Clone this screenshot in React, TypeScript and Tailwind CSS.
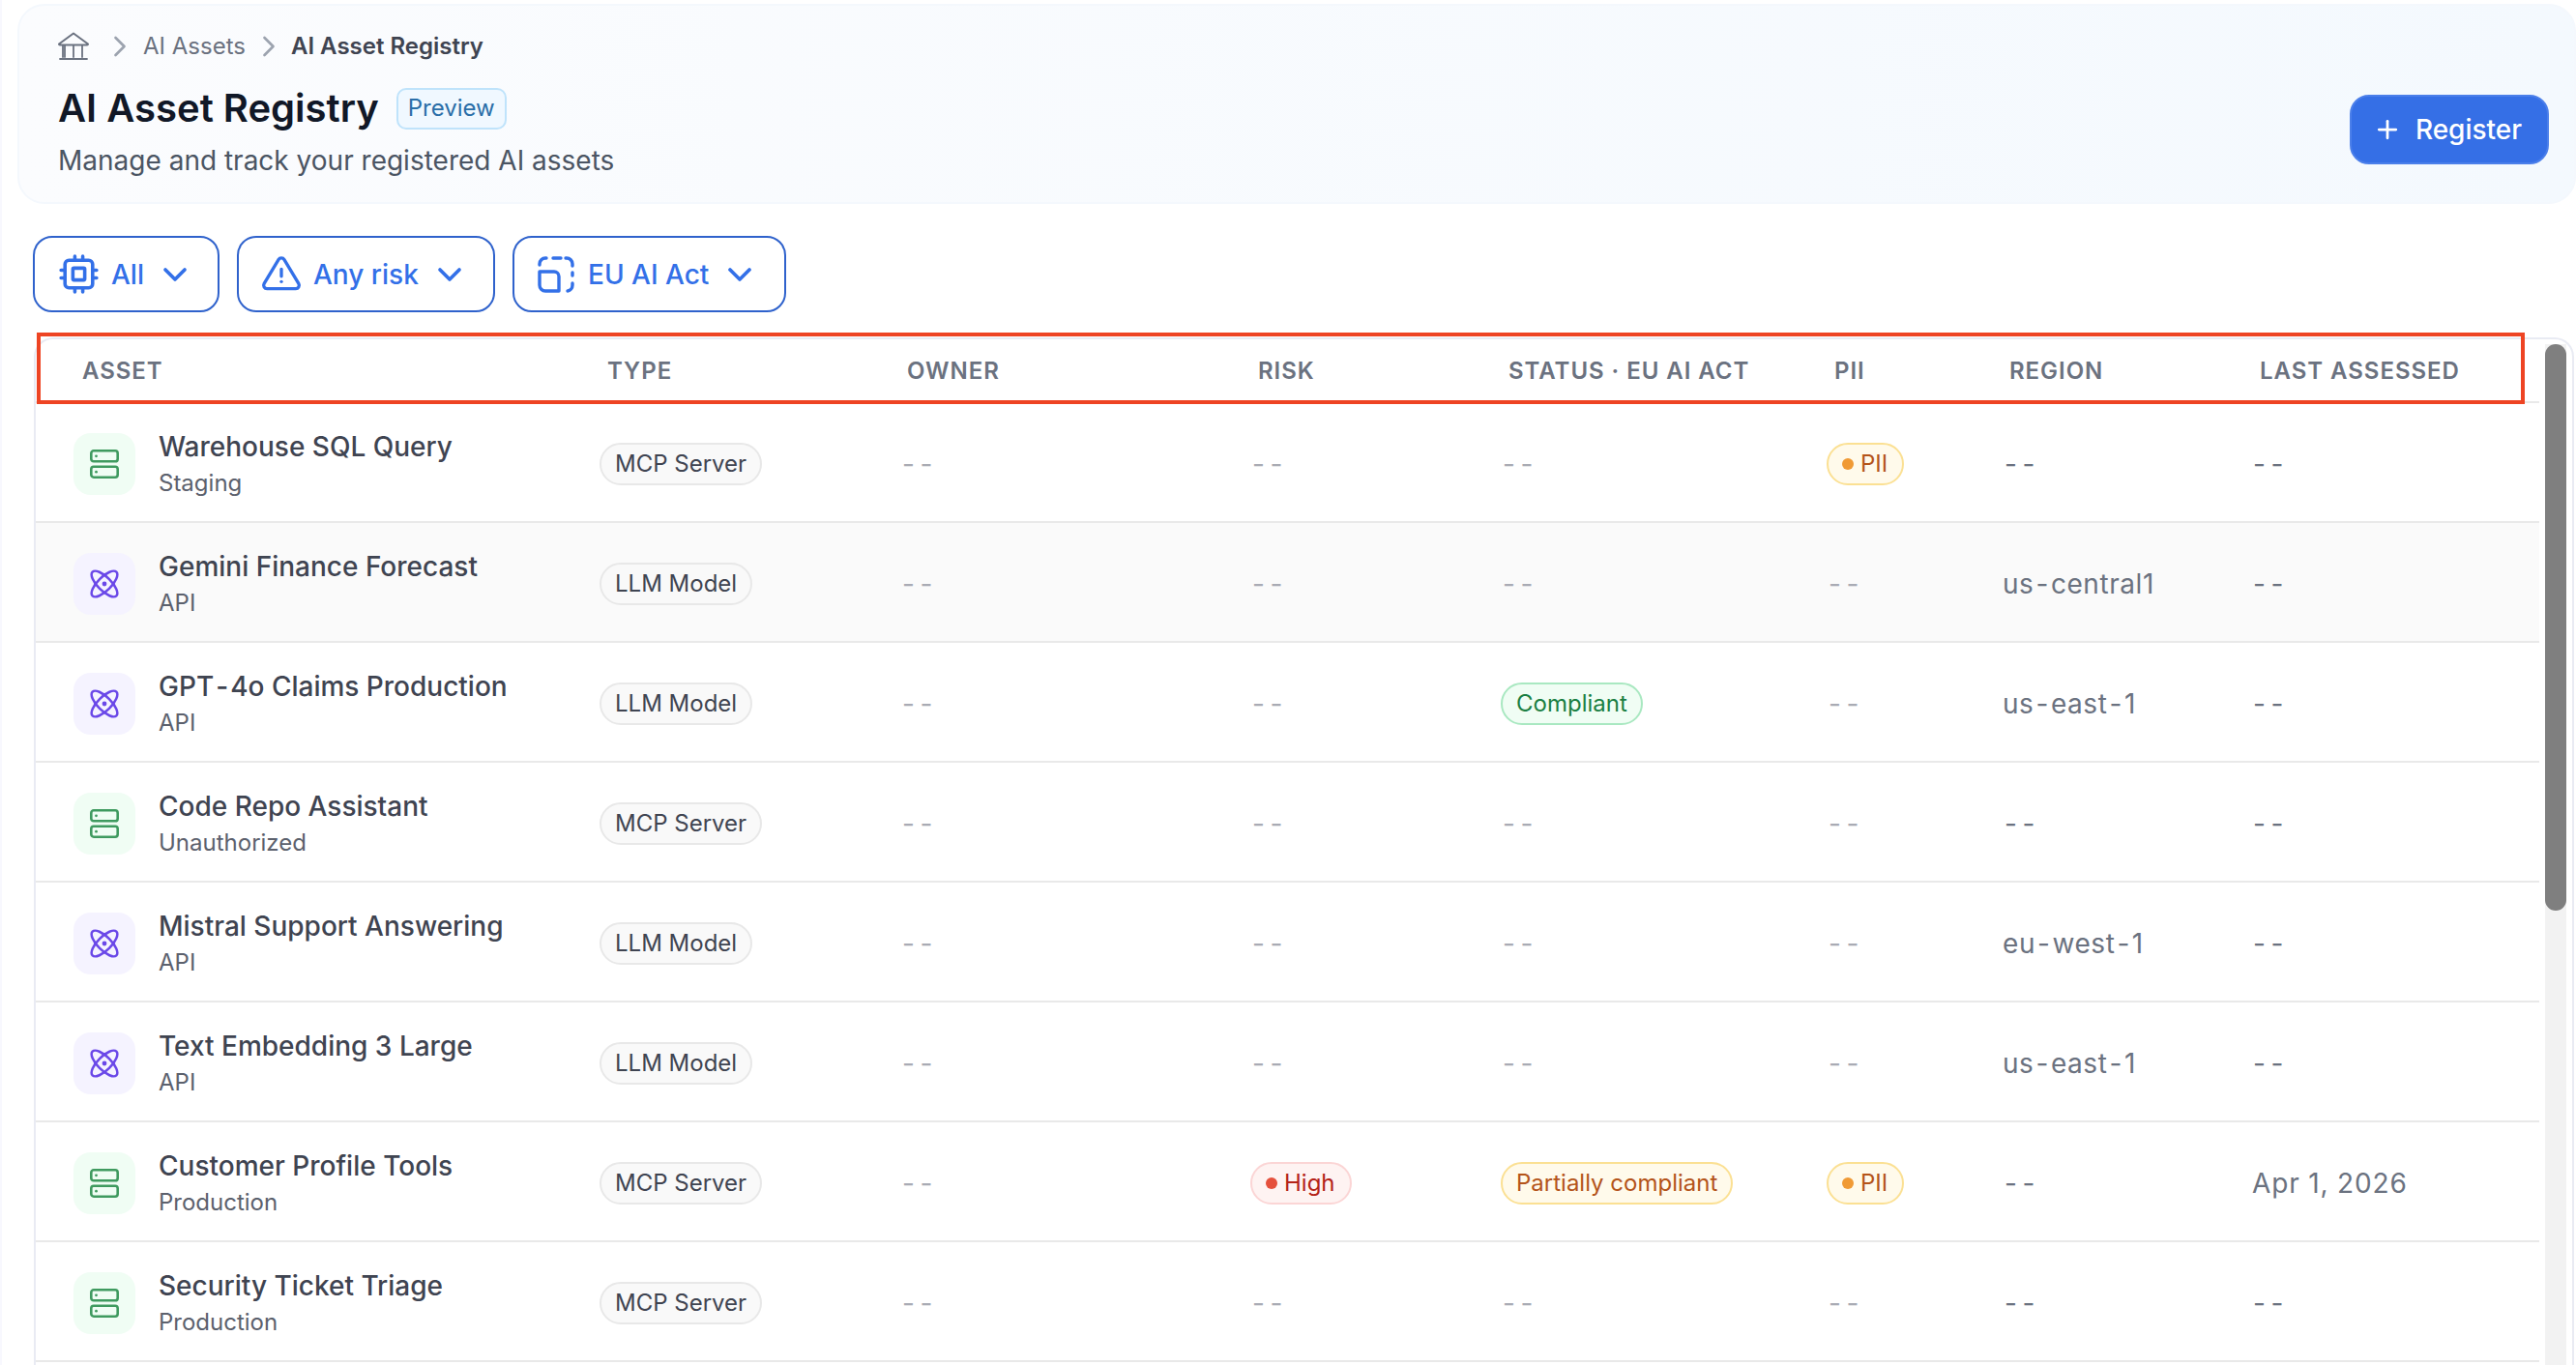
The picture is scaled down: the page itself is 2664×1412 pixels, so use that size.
import { Fragment } from "react";
import { ChevronDown, ChevronRight, Plus } from "lucide-react";

type Row = {
  name: string;
  sub: string;
  kind: "mcp" | "llm";
  risk?: boolean;
  status?: "ok" | "partial";
  pii?: boolean;
  region?: string;
  last?: string;
};

const rows: Row[] = [
  { name: "Warehouse SQL Query", sub: "Staging", kind: "mcp", pii: true },
  { name: "Gemini Finance Forecast", sub: "API", kind: "llm", region: "us-central1" },
  { name: "GPT-4o Claims Production", sub: "API", kind: "llm", status: "ok", region: "us-east-1" },
  { name: "Code Repo Assistant", sub: "Unauthorized", kind: "mcp" },
  { name: "Mistral Support Answering", sub: "API", kind: "llm", region: "eu-west-1" },
  { name: "Text Embedding 3 Large", sub: "API", kind: "llm", region: "us-east-1" },
  { name: "Customer Profile Tools", sub: "Production", kind: "mcp", risk: true, status: "partial", pii: true, last: "Apr 1, 2026" },
  { name: "Security Ticket Triage", sub: "Production", kind: "mcp" },
];

const columns = "grid grid-cols-[583px_313px_360px_259px_337px_182px_260px_1fr]";

const headers = [
  { label: "ASSET", pad: "pl-[48px]" },
  { label: "TYPE", pad: "pl-[8px]" },
  { label: "OWNER", pad: "pl-[5px]" },
  { label: "RISK", pad: "pl-[8px]" },
  { label: "STATUS · EU AI ACT", pad: "pl-[8px]" },
  { label: "PII", pad: "pl-[8px]" },
  { label: "REGION", pad: "pl-[7px]" },
  { label: "LAST ASSESSED", pad: "pl-[6px]" },
];

function BankIcon() {
  return (
    <svg width="32" height="30" viewBox="0 0 32 30" fill="none" stroke="#6b7280" strokeWidth="2" strokeLinejoin="round" strokeLinecap="round">
      <path d="M1 12.5 16 1.5l15 11c0 .6-.4 1-1 1H2c-.6 0-1-.4-1-1Z" />
      <path d="M7 14v12M16 14v12M25 14v12M2 28h28M5 14v12" strokeWidth="1.8" />
    </svg>
  );
}

function ChipIcon() {
  return (
    <svg width="49" height="49" viewBox="0 0 24 24" fill="none" stroke="currentColor" strokeWidth="1.75" strokeLinecap="round" strokeLinejoin="round">
      <rect x="5" y="5" width="14" height="14" rx="2" />
      <rect x="9" y="9" width="6" height="6" rx="0.5" />
      <path d="M3 10h2M3 14h2M10 3v2M14 3v2M21 10h-2M21 14h-2M14 21v-2M10 21v-2" />
    </svg>
  );
}

function AlertIcon() {
  return (
    <svg width="44" height="44" viewBox="0 0 24 24" fill="none" stroke="currentColor" strokeWidth="1.8" strokeLinecap="round" strokeLinejoin="round">
      <path d="M12 9v4" />
      <path d="M10.363 3.591l-8.106 13.534a1.914 1.914 0 0 0 1.636 2.871h16.214a1.914 1.914 0 0 0 1.636 -2.87l-8.106 -13.536a1.914 1.914 0 0 0 -3.274 0z" />
      <path d="M12 16h.01" />
    </svg>
  );
}

function ScopeIcon() {
  return (
    <svg width="38" height="38" viewBox="0 0 38 38" fill="none" stroke="currentColor" strokeWidth="3.4" strokeLinecap="round" strokeLinejoin="round">
      <path d="M2 9V8a6 6 0 0 1 6-6h1" />
      <path d="M16 2h8" />
      <path d="M29 2h1a6 6 0 0 1 6 6v2" />
      <path d="M36 17v3" />
      <path d="M36 28v2a6 6 0 0 1-5 6" />
      <path d="M2 16h15a5 5 0 0 1 5 5v15H8a6 6 0 0 1-6-6V16Z" />
    </svg>
  );
}

function ServerIcon() {
  return (
    <svg width="30" height="30" viewBox="0 0 30 30" fill="none" stroke="#3f9a5f" strokeWidth="2.6" strokeLinejoin="round">
      <rect x="1.3" y="1.3" width="27.4" height="11" rx="2.6" />
      <rect x="1.3" y="17.7" width="27.4" height="11" rx="2.6" />
      <circle cx="6.5" cy="6.8" r="1.4" fill="#3f9a5f" stroke="none" />
      <circle cx="6.5" cy="23.2" r="1.4" fill="#3f9a5f" stroke="none" />
    </svg>
  );
}

function AtomIcon() {
  return (
    <svg width="30" height="30" viewBox="0 0 30 30" fill="none" stroke="#6a48e8" strokeWidth="2.5">
      <ellipse cx="15" cy="15" rx="17.5" ry="7" transform="rotate(45 15 15)" />
      <ellipse cx="15" cy="15" rx="17.5" ry="7" transform="rotate(-45 15 15)" />
      <circle cx="15" cy="15" r="2.4" fill="#6a48e8" stroke="none" />
    </svg>
  );
}

function Filter({ icon, label, width, textGap }: { icon: React.ReactNode; label: string; width: string; textGap: string }) {
  return (
    <button className={`flex h-[79px] items-center rounded-[20px] border-2 border-[#2f62cc] bg-white text-[28px] font-medium text-[#3370e8] ${width}`}>
      {icon}
      <span className={textGap}>{label}</span>
      <ChevronDown size={40} strokeWidth={2.2} className="ml-[12px]" />
    </button>
  );
}

// the hyphen sits wider in the original font
function Hyphenated({ value }: { value: string }) {
  return (
    <>
      {value.split("-").map((part, i) => (
        <Fragment key={i}>
          {i > 0 && <span className="mx-[2px]">-</span>}
          {part}
        </Fragment>
      ))}
    </>
  );
}

function Dashes({ dark, className = "" }: { dark?: boolean; className?: string }) {
  return <span className={`text-[28px] tracking-[0.2em] ${dark ? "text-[#6b7280]" : "text-[#a9abb4]"} ${className}`}>--</span>;
}

function TypeBadge({ kind }: { kind: Row["kind"] }) {
  return (
    <span className="inline-flex h-[44px] items-center rounded-full border-2 border-[#e8e8e8] bg-[#f9f9f9] px-[14px] text-[24px] text-[#3f4451]">
      {kind === "mcp" ? "MCP Server" : "LLM Model"}
    </span>
  );
}

function Pill({ tone, dot, children }: { tone: string; dot?: string; children: React.ReactNode }) {
  return (
    <span className={`inline-flex h-[44px] items-center gap-[7px] rounded-full border-2 pl-[14px] text-[24px] ${dot ? "pr-[15px]" : "pr-[14px]"} ${tone}`}>
      {dot && <span className={`size-[12px] rounded-full ${dot}`} />}
      {children}
    </span>
  );
}

function PiiBadge() {
  return (
    <Pill tone="border-[#fbe093] bg-[#fffaeb] text-[#b4541a]" dot="bg-[#f09a35]">
      PII
    </Pill>
  );
}

function AssetRow({ row, shaded }: { row: Row; shaded: boolean }) {
  return (
    <div className={`${columns} h-[124px] items-center border-b-2 border-[#e9e9e9] pt-[3px] ${shaded ? "bg-[#fafafa]" : "bg-white"}`}>
      <div className="flex items-center gap-[24px] pl-[39px]">
        <div className={`flex size-[64px] items-center justify-center rounded-[18px] ${row.kind === "mcp" ? "bg-[#f0fdf4]" : "bg-[#f5f3ff]"}`}>
          {row.kind === "mcp" ? <ServerIcon /> : <AtomIcon />}
        </div>
        <div className="flex flex-col">
          <span className="text-[28px] leading-[38px] font-medium text-[#3f4451]">
            <Hyphenated value={row.name} />
          </span>
          <span className="mt-[2px] text-[24px] leading-[34px] text-[#5c616d]">{row.sub}</span>
        </div>
      </div>
      <div>
        <TypeBadge kind={row.kind} />
      </div>
      <div>
        <Dashes />
      </div>
      <div>
        {row.risk ? (
          <Pill tone="border-[#fbd5d5] bg-[#fef3f2] text-[#b42318]" dot="bg-[#e5503c]">
            High
          </Pill>
        ) : (
          <Dashes className="ml-[2px]" />
        )}
      </div>
      <div>
        {row.status === "ok" && <Pill tone="border-[#a9e8c1] bg-[#f0fdf4] text-[#1b7f43]">Compliant</Pill>}
        {row.status === "partial" && <Pill tone="border-[#fbe093] bg-[#fffaeb] text-[#b4541a]">Partially compliant</Pill>}
        {!row.status && <Dashes className="ml-[2px]" />}
      </div>
      <div>{row.pii ? <PiiBadge /> : <Dashes className="ml-[2px]" />}</div>
      <div>
        {row.region ? (
          <span className="text-[28px] tracking-[0.02em] text-[#6b7280]">
            <Hyphenated value={row.region} />
          </span>
        ) : (
          <Dashes dark className="ml-[2px]" />
        )}
      </div>
      <div>
        {row.last ? <span className="-ml-[2px] text-[28px] tracking-[0.03em] text-[#6b7280]">{row.last}</span> : <Dashes dark className="-ml-[1px]" />}
      </div>
    </div>
  );
}

export default function App() {
  return (
    <div className="relative flex h-[1412px] w-full flex-col overflow-hidden border-l-2 border-[#f8f8fe] bg-white font-[family-name:Inter,sans-serif]">
      <header className="mt-[4px] ml-[16px] flex items-end justify-between rounded-[28px] border-2 border-[#f4f8fd] bg-gradient-to-r from-[#fbfcfe] to-[#f4f9fe] pt-[23px] pr-[26px] pb-[23px] pl-[40px]">
        <div>
          <nav className="flex h-[38px] items-center text-[24px]">
            <BankIcon />
            <ChevronRight size={36} strokeWidth={1.8} className="mr-[6px] ml-[14px] text-[#9ca3af]" />
            <span className="text-[#6b7280]">AI Assets</span>
            <ChevronRight size={36} strokeWidth={1.8} className="mr-[5px] ml-[6px] text-[#9ca3af]" />
            <span className="font-semibold text-[#3f4451]">AI Asset Registry</span>
          </nav>
          <div className="mt-[20px] flex h-[50px] items-center gap-[18px]">
            <h1 className="text-[40px] font-semibold text-[#111827]">AI Asset Registry</h1>
            <span className="flex h-[43px] items-center rounded-[10px] border-2 border-[#bfe3fb] bg-[#f0f8ff] px-[10px] text-[24px] text-[#2a6ea8]">
              Preview
            </span>
          </div>
          <p className="mt-[9px] h-[40px] text-[28px] leading-[40px] text-[#4b5563]">Manage and track your registered AI assets</p>
        </div>
        <button className="mb-[16px] flex h-[72px] w-[206px] items-center justify-center gap-[14px] rounded-[20px] border-2 border-[#4b7fea] bg-[#356fe6] pr-[4px] text-[28px] font-medium text-white">
          <Plus size={30} strokeWidth={2.2} />
          Register
        </button>
      </header>

      <div className="mt-[33px] ml-[32px] flex gap-[18px]">
        <Filter icon={<ChipIcon />} label="All" width="w-[193px] pl-[21px]" textGap="ml-[9px]" />
        <Filter icon={<AlertIcon />} label="Any risk" width="w-[267px] pl-[22px]" textGap="ml-[11px]" />
        <Filter icon={<ScopeIcon />} label="EU AI Act" width="w-[283px] pl-[24px]" textGap="ml-[14px]" />
      </div>

      <div className="mt-[26px] mr-[2px] ml-[33px] flex min-h-0 flex-1 rounded-t-[20px] border-x-2 border-t-2 border-[#e9ebf3]">
        <div className="w-[2589px]">
          <div className={`${columns} h-[66px] items-center border-b-2 border-[#e9e9e9] pt-[2px] text-[24px] font-semibold tracking-[0.04em] text-[#6b7280]`}>
            {headers.map((h) => (
              <span key={h.label} className={h.pad}>
                {h.label}
              </span>
            ))}
          </div>
          {rows.map((row, i) => (
            <AssetRow key={row.name} row={row} shaded={i === 1} />
          ))}
        </div>
        <div className="mt-[5px] ml-[6px] w-[22px] bg-[#f2f2f2]">
          <div className="h-[586px] rounded-full bg-[#7f7f7f]" />
        </div>
      </div>

      {/* annotation box around the table head */}
      <div className="absolute top-[344px] left-[36px] h-[74px] w-[2573px] border-4 border-[#ee4423]" />
    </div>
  );
}
